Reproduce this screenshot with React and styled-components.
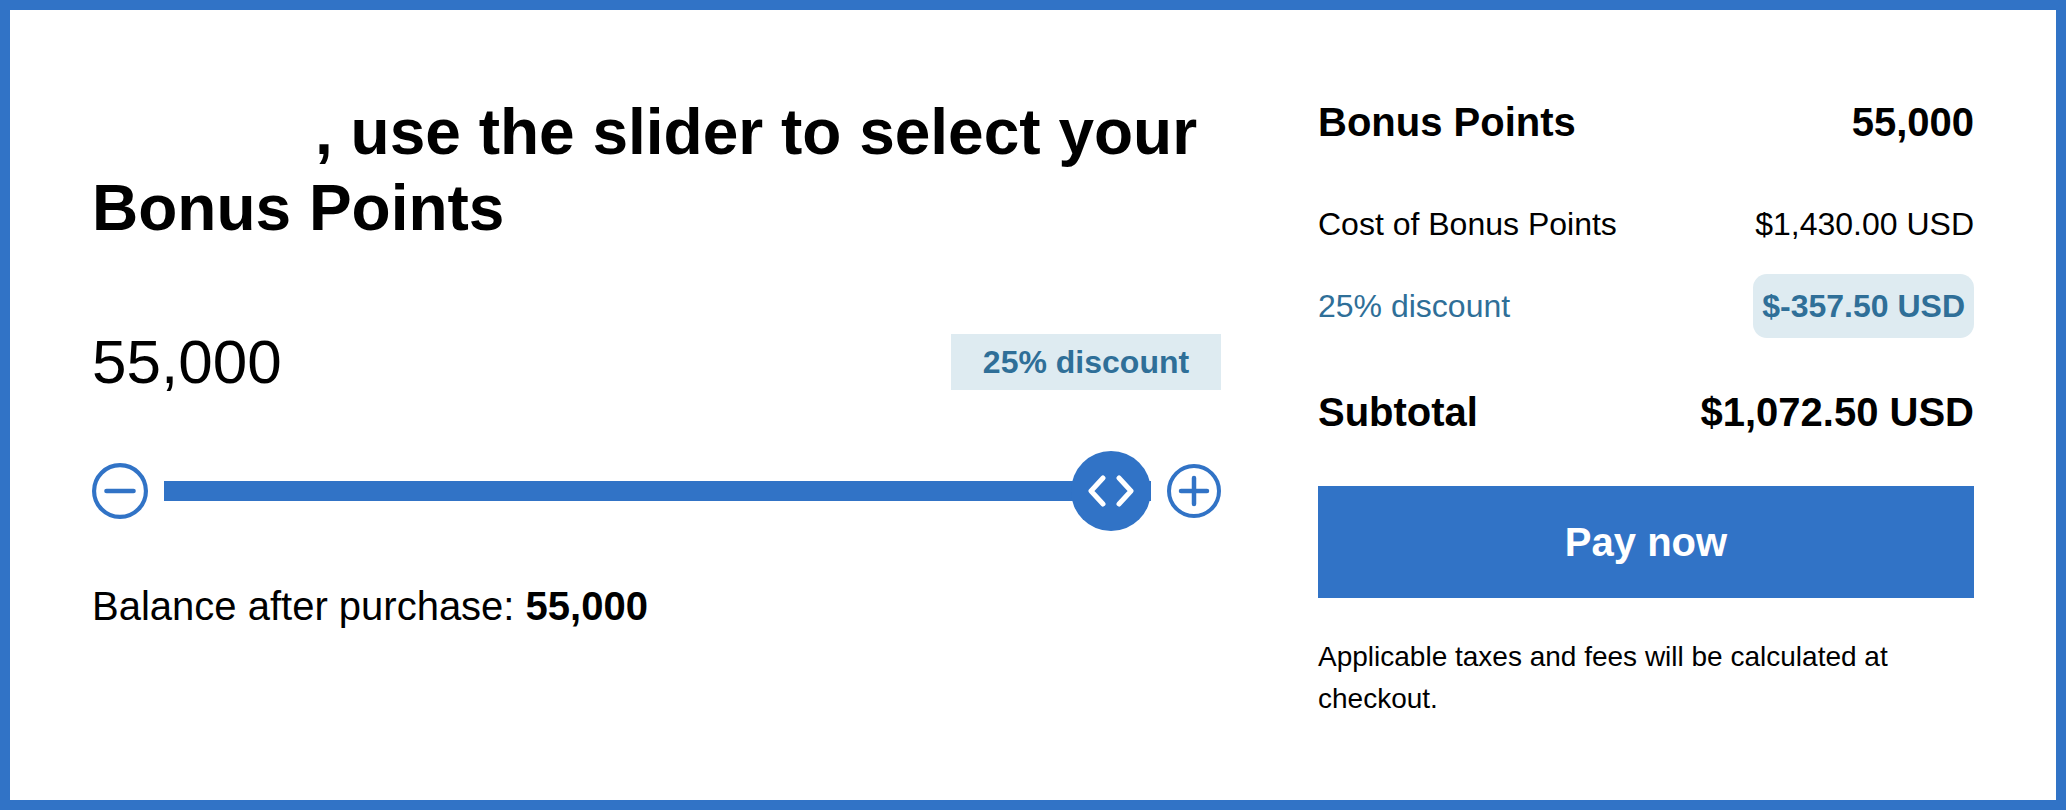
import styled, { createGlobalStyle } from 'styled-components';

const BLUE = '#3173c6';
const TEAL = '#2f6f98';
const TINT = '#deebf1';

const GlobalStyle = createGlobalStyle`
  * {
    box-sizing: border-box;
  }
  html, body {
    margin: 0;
    padding: 0;
    background: #fff;
  }
  body {
    font-family: "Liberation Sans", Arial, Helvetica, sans-serif;
    color: #000;
  }
`;

const Frame = styled.div`
  width: 2066px;
  height: 810px;
  border: 10px solid ${BLUE};
  padding: 60px 82px;
  display: flex;
  gap: 97px;
`;

const SliderColumn = styled.section`
  flex: 1;
  display: flex;
  flex-direction: column;
`;

const SummaryColumn = styled.aside`
  width: 656px;
  flex-shrink: 0;
  display: flex;
  flex-direction: column;
`;

const Heading = styled.h1`
  margin: 24px 0 0;
  font-size: 64px;
  line-height: 76px;
  font-weight: 700;
`;

const NamePlaceholder = styled.span`
  display: inline-block;
  width: 223px;
`;

const AmountRow = styled.div`
  margin-top: 80px;
  display: flex;
  align-items: center;
  justify-content: space-between;
`;

const Amount = styled.div`
  font-size: 62px;
  line-height: 72px;
`;

const DiscountTag = styled.div`
  width: 270px;
  height: 56px;
  display: flex;
  align-items: center;
  justify-content: center;
  background: ${TINT};
  color: ${TEAL};
  font-size: 32px;
  font-weight: 700;
`;

const SliderRow = styled.div`
  margin-top: 53px;
  height: 80px;
  display: flex;
  align-items: center;
  gap: 16px;
`;

const StepButton = styled.button`
  width: ${(p) => p.$size}px;
  height: ${(p) => p.$size}px;
  padding: 0;
  border: none;
  background: none;
  display: flex;
  cursor: pointer;
  flex-shrink: 0;
`;

const Track = styled.div`
  position: relative;
  flex: 1;
  height: 20px;
  background: ${BLUE};
`;

const Thumb = styled.div`
  position: absolute;
  top: 50%;
  width: 80px;
  height: 80px;
  margin-top: -40px;
  border-radius: 50%;
  background: ${BLUE};
  display: flex;
  align-items: center;
  justify-content: center;
`;

const Balance = styled.p`
  margin: 51px 0 0;
  font-size: 40px;
  line-height: 48px;

  strong {
    font-weight: 700;
  }
`;

const SummaryRow = styled.div`
  display: flex;
  align-items: center;
  justify-content: space-between;
  margin-top: ${(p) => p.$gap}px;
  font-size: ${(p) => (p.$large ? 40 : 32)}px;
  line-height: ${(p) => (p.$large ? 48 : 40)}px;
  font-weight: ${(p) => (p.$bold ? 700 : 400)};
  color: ${(p) => (p.$accent ? TEAL : '#000')};
`;

const SavingsPill = styled.span`
  padding: 14px 9px;
  border-radius: 14px;
  background: ${TINT};
  color: ${TEAL};
  font-size: 32px;
  line-height: 36px;
  font-weight: 700;
`;

const PayButton = styled.button`
  margin-top: 50px;
  height: 112px;
  width: 100%;
  border: none;
  background: ${BLUE};
  color: #fff;
  font-family: inherit;
  font-size: 40px;
  font-weight: 700;
  cursor: pointer;
`;

const Footnote = styled.p`
  margin: 38px 0 0;
  font-size: 28px;
  line-height: 42px;
`;

const CircleIcon = ({ size, plus }) => (
  <svg width={size} height={size} viewBox="0 0 54 54" fill="none">
    <circle cx="27" cy="27" r="25" stroke={BLUE} strokeWidth="4" />
    <path d="M14 27h26" stroke={BLUE} strokeWidth="4.5" strokeLinecap="round" />
    {plus && <path d="M27 14v26" stroke={BLUE} strokeWidth="4.5" strokeLinecap="round" />}
  </svg>
);

const Chevrons = () => (
  <svg width="50" height="32" viewBox="0 0 50 32" fill="none">
    <path
      d="M17 3 5 16l12 13M33 3l12 13-12 13"
      stroke="#fff"
      strokeWidth="5"
      strokeLinecap="round"
      strokeLinejoin="round"
    />
  </svg>
);

export default function App() {
  const points = 55000;
  const max = 55000;
  const pct = (points / max) * 100;

  return (
    <>
      <GlobalStyle />
      <Frame>
        <SliderColumn>
          <Heading>
            <NamePlaceholder />, use the slider to select your Bonus Points
          </Heading>
          <AmountRow>
            <Amount>55,000</Amount>
            <DiscountTag>25% discount</DiscountTag>
          </AmountRow>
          <SliderRow>
            <StepButton $size={56} aria-label="Decrease">
              <CircleIcon size={56} />
            </StepButton>
            <Track>
              <Thumb style={{ left: `calc(${pct}% - 80px)` }}>
                <Chevrons />
              </Thumb>
            </Track>
            <StepButton $size={54} aria-label="Increase">
              <CircleIcon size={54} plus />
            </StepButton>
          </SliderRow>
          <Balance>
            Balance after purchase: <strong>55,000</strong>
          </Balance>
        </SliderColumn>

        <SummaryColumn>
          <SummaryRow $gap={28} $large $bold>
            <span>Bonus Points</span>
            <span>55,000</span>
          </SummaryRow>
          <SummaryRow $gap={58}>
            <span>Cost of Bonus Points</span>
            <span>$1,430.00 USD</span>
          </SummaryRow>
          <SummaryRow $gap={30} $accent>
            <span>25% discount</span>
            <SavingsPill>$-357.50 USD</SavingsPill>
          </SummaryRow>
          <SummaryRow $gap={50} $large $bold>
            <span>Subtotal</span>
            <span>$1,072.50 USD</span>
          </SummaryRow>
          <PayButton>Pay now</PayButton>
          <Footnote>Applicable taxes and fees will be calculated at checkout.</Footnote>
        </SummaryColumn>
      </Frame>
    </>
  );
}
